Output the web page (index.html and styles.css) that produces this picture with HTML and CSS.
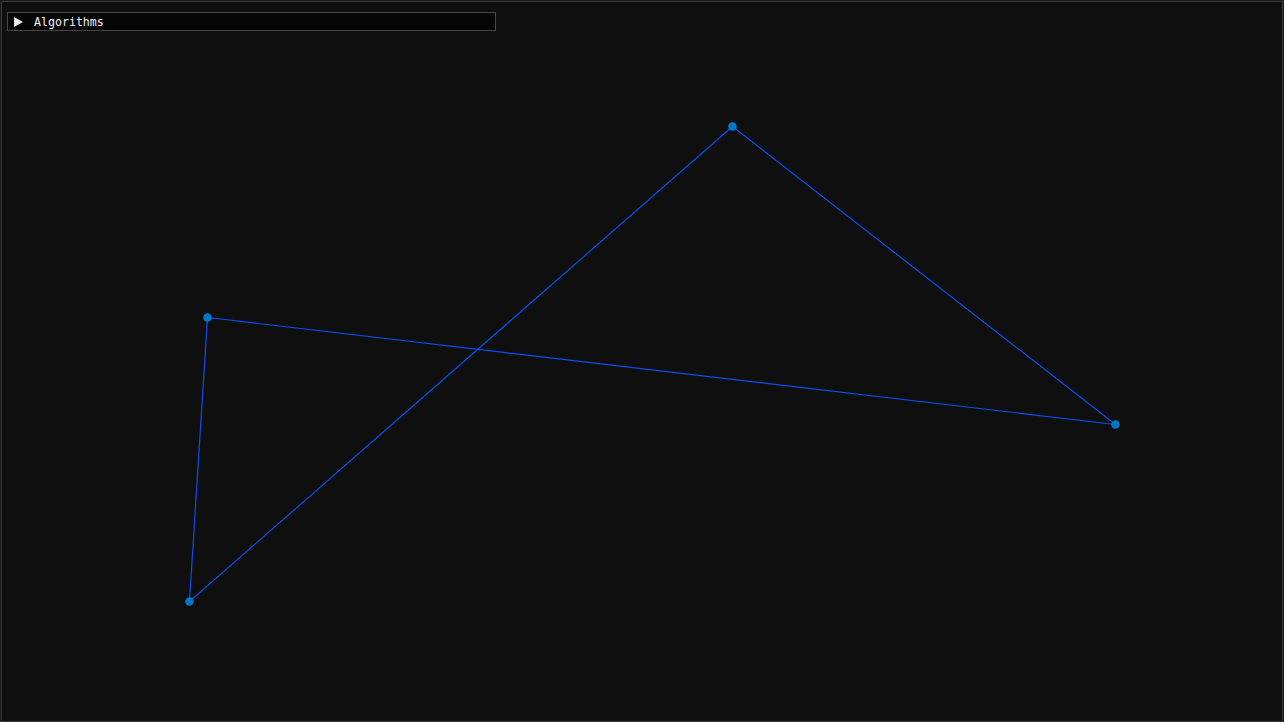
FILE: index.html
```html
<!DOCTYPE html>
<html>
<head>
<meta charset="utf-8">
<link rel="stylesheet" href="styles.css">
</head>
<body>
<div class="window">
  <div class="header">
    <svg class="arrow" width="9" height="10" viewBox="0 0 9 10"><polygon points="0,0 9,5 0,10" fill="#f2f2f2"/></svg>
    <span class="title">Algorithms</span>
  </div>
  <svg class="canvas" width="1284" height="722" viewBox="0 0 1284 722">
    <g stroke="#0a4ff0" stroke-width="1.2" fill="none">
      <line x1="732.5" y1="126.5" x2="1115.5" y2="424.5"/>
      <line x1="1115.5" y1="424.5" x2="207.5" y2="317.5"/>
      <line x1="207.5" y1="317.5" x2="189.5" y2="601.5"/>
      <line x1="189.5" y1="601.5" x2="732.5" y2="126.5"/>
    </g>
    <g fill="#0078c8">
      <circle cx="732.5" cy="126.5" r="4.3"/>
      <circle cx="207.5" cy="317.5" r="4.3"/>
      <circle cx="1115.5" cy="424.5" r="4.3"/>
      <circle cx="189.5" cy="601.5" r="4.3"/>
    </g>
  </svg>
</div>
</body>
</html>
```
FILE: styles.css
```css
html, body {
  margin: 0;
  padding: 0;
  background: #1a1a1a;
  width: 1284px;
  height: 722px;
  overflow: hidden;
}
.window {
  position: relative;
  box-sizing: border-box;
  width: 1282px;
  height: 721px;
  margin: 1px 0 0 1px;
  border: 1px solid #3a3a3e;
  background: #0f0f0f;
  padding: 10px 0 0 5px;
}
.header {
  position: relative;
  z-index: 1;
  box-sizing: border-box;
  width: 489px;
  height: 19px;
  border: 1px solid #45454d;
  background: #060606;
  display: flex;
  align-items: center;
  padding-left: 6px;
  font-family: "DejaVu Sans Mono", "Liberation Mono", monospace;
  font-size: 11.6px;
  color: #f0f0f0;
}
.arrow {
  display: block;
  margin-right: 11px;
}
.canvas {
  position: absolute;
  left: -2px;
  top: -2px;
}
```
